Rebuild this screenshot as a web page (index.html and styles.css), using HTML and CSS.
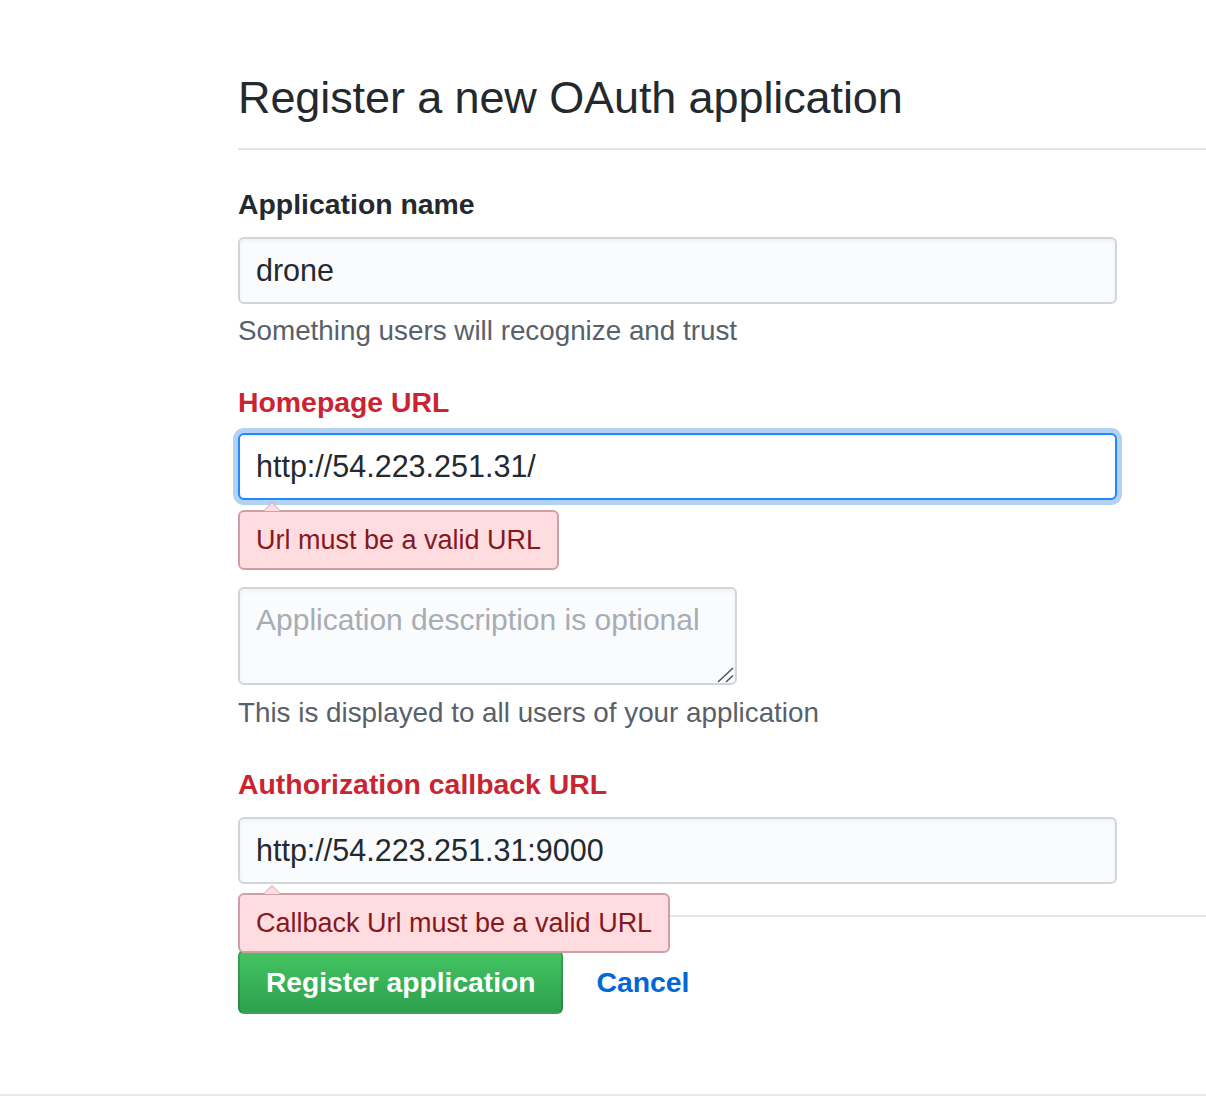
FILE: index.html
```html
<!DOCTYPE html>
<html lang="en">
<head>
<meta charset="utf-8">
<title>Register a new OAuth application</title>
<link rel="stylesheet" href="styles.css">
</head>
<body>
<main class="page">
  <div class="content">
    <h1 class="subhead">Register a new OAuth application</h1>
    <form class="form">
      <div class="group">
        <label class="label" for="app-name">Application name</label>
        <input class="control" id="app-name" type="text" value="drone">
        <p class="note">Something users will recognize and trust</p>
      </div>
      <div class="group errored group-gap">
        <label class="label" for="homepage">Homepage URL</label>
        <input class="control focused" id="homepage" type="text" value="http://54.223.251.31/">
        <div class="error">Url must be a valid URL</div>
      </div>
      <div class="group plain">
        <div class="area-wrap">
          <textarea class="control area" placeholder="Application description is optional"></textarea>
          <svg class="grip" width="18" height="16" viewBox="0 0 18 16" aria-hidden="true">
            <path d="M1.5 14.5 L15.5 1.5" stroke="#555" stroke-width="1.6" fill="none" stroke-linecap="round"/>
            <path d="M9.5 14.5 L15.5 9" stroke="#555" stroke-width="1.6" fill="none" stroke-linecap="round"/>
          </svg>
        </div>
        <p class="note">This is displayed to all users of your application</p>
      </div>
      <div class="group errored last">
        <label class="label" for="callback">Authorization callback URL</label>
        <input class="control" id="callback" type="text" value="http://54.223.251.31:9000">
        <div class="error">Callback Url must be a valid URL</div>
      </div>
      <hr class="rule">
      <div class="actions">
        <button class="btn" type="button">Register application</button>
        <a class="cancel" href="#">Cancel</a>
      </div>
    </form>
  </div>
  <footer class="footer"></footer>
</main>
</body>
</html>
```

FILE: styles.css
```css
html, body {
  margin: 0;
  padding: 0;
  background: #ffffff;
}

body {
  font-family: "Liberation Sans", Arial, sans-serif;
  color: #24292e;
}

.page {
  display: block;
}

.content {
  margin-left: 238px;
}

.subhead {
  margin: 0;
  padding: 70px 0 22px;
  font-size: 45px;
  line-height: 56px;
  font-weight: 400;
  letter-spacing: -0.1px;
  color: #24292e;
  border-bottom: 2px solid #e1e4e8;
}

.form {
  display: block;
}

.group {
  position: relative;
  margin-top: 37px;
}

.group.plain {
  margin-top: 0;
}

.group-gap {
  margin-bottom: 87px;
}

.label {
  display: block;
  font-size: 28.4px;
  line-height: 34px;
  font-weight: 700;
  color: #24292e;
}

.errored .label {
  color: #cb2431;
}

.control {
  display: block;
  box-sizing: border-box;
  width: 879px;
  height: 67px;
  margin: 16px 0 0;
  padding: 0 16px;
  font-family: "Liberation Sans", Arial, sans-serif;
  font-size: 30.5px;
  color: #24292e;
  background: #fafbfc;
  border: 2px solid #d1d5da;
  border-radius: 6px;
  box-shadow: inset 0 2px 4px rgba(27, 31, 35, 0.05);
  outline: none;
}

.errored .control {
  margin-top: 14px;
}

.errored.last .control {
  margin-top: 16px;
}

.control.focused {
  background: #ffffff;
  border-color: #2188ff;
  box-shadow: inset 0 2px 4px rgba(27, 31, 35, 0.05), 0 0 0 5px rgba(3, 102, 214, 0.3);
}

.area-wrap {
  position: relative;
  width: 499px;
}

.area {
  width: 499px;
  height: 98px;
  margin: 0;
  padding: 14px 16px;
  font-size: 30px;
  line-height: 34px;
  resize: none;
}

.area::placeholder {
  color: #a7adb3;
}

.grip {
  position: absolute;
  right: 2px;
  bottom: 2px;
}

.note {
  margin: 10px 0 0;
  font-size: 27.8px;
  line-height: 34px;
  color: #586069;
}

.plain .note {
  margin-top: 11px;
}

.error {
  position: absolute;
  top: 100%;
  left: 0;
  margin-top: 10px;
  box-sizing: border-box;
  height: 60px;
  padding: 0 16px;
  font-size: 27px;
  line-height: 56px;
  color: #86181d;
  background: #ffdce0;
  border: 2px solid #cea0a5;
  border-radius: 6px;
  white-space: nowrap;
  z-index: 2;
}

.last .error {
  margin-top: 9px;
}

.error::before,
.error::after {
  content: "";
  position: absolute;
  left: 24px;
  width: 0;
  height: 0;
  border-style: solid;
  border-color: transparent;
}

.error::before {
  top: -20px;
  border-width: 10px;
  border-bottom-color: #cea0a5;
  left: 22px;
}

.error::after {
  top: -17px;
  border-width: 8px;
  border-bottom-color: #ffdce0;
}

.rule {
  margin: 31px 0 0;
  height: 0;
  border: 0;
  border-top: 2px solid #e1e4e8;
}

.actions {
  display: flex;
  align-items: center;
  gap: 33px;
  margin-top: 33px;
}

.btn {
  box-sizing: border-box;
  height: 64px;
  padding: 0 26px;
  font-family: "Liberation Sans", Arial, sans-serif;
  font-size: 28.2px;
  font-weight: 700;
  color: #ffffff;
  background: linear-gradient(180deg, #45c463 0%, #2ea44f 90%);
  border: 2px solid rgba(27, 31, 35, 0.2);
  border-radius: 6px;
}

.cancel {
  font-size: 28.4px;
  font-weight: 700;
  color: #0366d6;
  text-decoration: none;
}

.footer {
  margin-top: 80px;
  height: 6px;
  border-top: 2px solid #eaeaea;
}
```
